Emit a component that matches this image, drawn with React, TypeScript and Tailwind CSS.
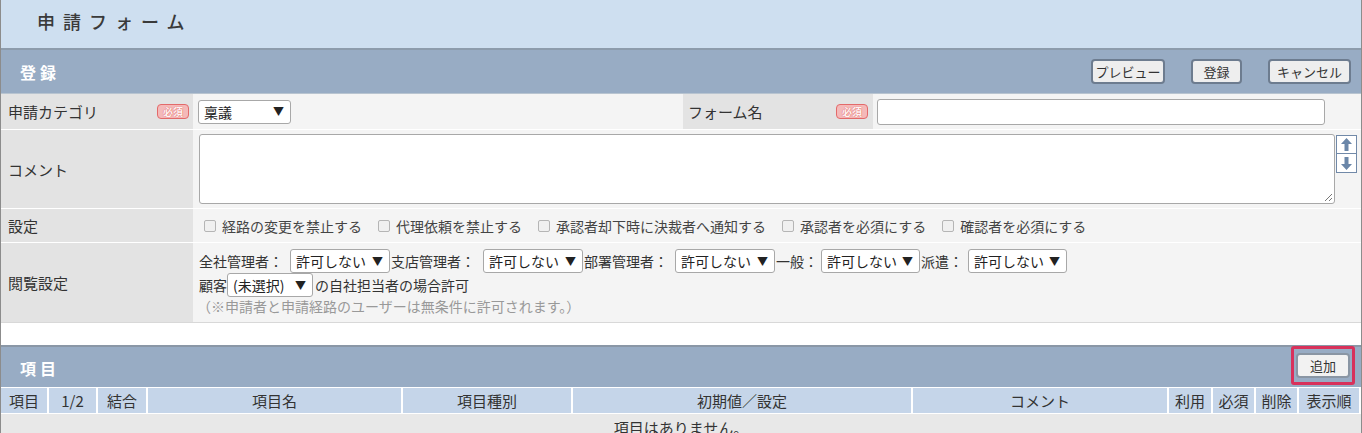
import React from "react";

function Sel({ label, className }: { label: string; className: string }) {
  return (
    <span
      className={`inline-flex items-center justify-between h-[24px] border border-[#a8a8a8] rounded-[3px] bg-white pl-[5px] pr-[6px] text-[14px] text-[#222] ${className}`}
    >
      <span>{label}</span>
      <span className="text-[11px]">▼</span>
    </span>
  );
}

function Badge() {
  return (
    <span className="inline-flex items-center justify-center w-[32px] h-[15px] rounded-[4px] border border-[#e36a6a] bg-[#f4b9b9] text-[10px] leading-none text-[#fff4f4] font-bold [text-shadow:0_0_1px_#d23c3c]">
      必須
    </span>
  );
}

function Btn({ label, className }: { label: string; className: string }) {
  return (
    <span
      className={`inline-flex items-center justify-center h-[25px] rounded-[4px] border-2 border-[#6d7c8f] bg-[#eeeeee] text-[13px] text-[#333] ${className}`}
    >
      {label}
    </span>
  );
}

function Check({ label }: { label: string }) {
  return (
    <span className="inline-flex items-center mr-[16px]">
      <span className="w-[12px] h-[12px] border border-[#b5b5b5] rounded-[2px] bg-[#f0f0f0] mr-[6px]" />
      <span>{label}</span>
    </span>
  );
}

const cols: { label: string; w: string }[] = [
  { label: "項目", w: "w-[48px]" },
  { label: "1/2", w: "w-[49px]" },
  { label: "結合", w: "w-[50px]" },
  { label: "項目名", w: "w-[255px]" },
  { label: "項目種別", w: "w-[170px]" },
  { label: "初期値／設定", w: "w-[340px]" },
  { label: "コメント", w: "w-[256px]" },
  { label: "利用", w: "w-[44px]" },
  { label: "必須", w: "w-[43px]" },
  { label: "削除", w: "w-[43px]" },
  { label: "表示順", w: "w-[60px]" },
];

export default function App() {
  return (
    <div className="w-[1362px] h-[433px] overflow-hidden bg-white border-x border-[#8c8c8c] font-['Noto_Sans_CJK_JP',sans-serif] text-[#333] text-[14px] leading-none">
      {/* top title */}
      <div className="h-[50px] bg-[#cedff0] border-b-2 border-[#8d9cac] flex items-center pl-[36px] pb-[6px]">
        <span className="text-[18px] tracking-[8px] text-[#3a3a3a] font-medium">申請フォーム</span>
      </div>

      {/* section header */}
      <div className="h-[43px] bg-[#98acc4] flex items-center justify-between pl-[19px] pr-[10px]">
        <span className="text-[16px] font-bold text-white tracking-[4px] mt-[1px]">登録</span>
        <div className="flex items-center gap-[26px]">
          <Btn label="プレビュー" className="w-[74px]" />
          <Btn label="登録" className="w-[51px]" />
          <Btn label="キャンセル" className="w-[83px]" />
        </div>
      </div>

      {/* row 1 */}
      <div className="flex h-[37px] border-t border-[#b8c4d0] border-b border-b-white">
        <div className="w-[192px] bg-[#e3e3e3] flex items-center justify-between pl-[7px] pr-[4px]">
          <span className="text-[15px]">申請カテゴリ</span>
          <Badge />
        </div>
        <div className="w-[490px] bg-[#f4f4f4] flex items-center pl-[5px]">
          <Sel label="稟議" className="w-[93px]" />
        </div>
        <div className="w-[190px] bg-[#e3e3e3] flex items-center justify-between pl-[5px] pr-[5px]">
          <span className="text-[15px]">フォーム名</span>
          <Badge />
        </div>
        <div className="flex-1 bg-[#f4f4f4] flex items-center pl-[4px]">
          <span className="w-[448px] h-[26px] border border-[#a8a8a8] rounded-[3px] bg-white" />
        </div>
      </div>

      {/* row 2 */}
      <div className="flex h-[79px] border-b border-white">
        <div className="w-[192px] bg-[#e3e3e3] flex items-center pl-[7px]">
          <span className="text-[15px]">コメント</span>
        </div>
        <div className="flex-1 bg-[#f4f4f4] flex items-start pl-[6px] pt-[4px]">
          <div className="relative w-[1136px] h-[70px] border border-[#a8a8a8] rounded-[3px] bg-white">
            <svg className="absolute right-[1px] bottom-[1px]" width="11" height="11" viewBox="0 0 11 11">
              <path d="M10 3 L3 10 M10 7 L7 10" stroke="#777" strokeWidth="1" />
            </svg>
          </div>
          <div className="flex flex-col ml-[1px] mt-[1px]">
            <span className="w-[21px] h-[19px] border border-[#7189a8] bg-white flex items-center justify-center">
              <svg width="13" height="15" viewBox="0 0 13 15">
                <path d="M6.5 1 L12 7 L8.5 7 L8.5 14 L4.5 14 L4.5 7 L1 7 Z" fill="#6a86a8" />
              </svg>
            </span>
            <span className="w-[21px] h-[19px] border border-t-0 border-[#7189a8] bg-white flex items-center justify-center">
              <svg width="13" height="15" viewBox="0 0 13 15">
                <path d="M6.5 14 L12 8 L8.5 8 L8.5 1 L4.5 1 L4.5 8 L1 8 Z" fill="#6a86a8" />
              </svg>
            </span>
          </div>
        </div>
      </div>

      {/* row 3 */}
      <div className="flex h-[34px] border-b border-white">
        <div className="w-[192px] bg-[#e3e3e3] flex items-center pl-[7px]">
          <span className="text-[15px]">設定</span>
        </div>
        <div className="flex-1 bg-[#f4f4f4] flex items-center pl-[11px] text-[14px] text-[#444]">
          <Check label="経路の変更を禁止する" />
          <Check label="代理依頼を禁止する" />
          <Check label="承認者却下時に決裁者へ通知する" />
          <Check label="承認者を必須にする" />
          <Check label="確認者を必須にする" />
        </div>
      </div>

      {/* row 4 */}
      <div className="flex h-[80px] border-b border-[#d8d8d8]">
        <div className="w-[192px] bg-[#e3e3e3] flex items-center pl-[7px]">
          <span className="text-[15px]">閲覧設定</span>
        </div>
        <div className="flex-1 bg-[#f4f4f4] flex flex-col pl-[6px] pt-[6px] text-[14px]">
          <div className="flex items-center h-[24px]">
            <span className="w-[91px]">全社管理者：</span>
            <Sel label="許可しない" className="w-[100px]" />
            <span className="w-[93px] pl-[1px]">支店管理者：</span>
            <Sel label="許可しない" className="w-[100px]" />
            <span className="w-[92px] pl-[1px]">部署管理者：</span>
            <Sel label="許可しない" className="w-[100px]" />
            <span className="w-[46px] pl-[1px]">一般：</span>
            <Sel label="許可しない" className="w-[99px]" />
            <span className="w-[48px] pl-[1px]">派遣：</span>
            <Sel label="許可しない" className="w-[99px]" />
          </div>
          <div className="flex items-center h-[22px] mt-[1px]">
            <span>顧客</span>
            <Sel label="(未選択)" className="w-[86px] h-[21px]" />
            <span className="ml-[2px]">の自社担当者の場合許可</span>
          </div>
          <div className="h-[20px] flex items-center -ml-[2px] text-[14px] text-[#999]">
            （※申請者と申請経路のユーザーは無条件に許可されます。）
          </div>
        </div>
      </div>

      {/* gap */}
      <div className="h-[22px] bg-white" />

      {/* items header */}
      <div className="h-[42px] bg-[#98acc4] border-t-2 border-[#8a97a6] flex items-center justify-between pl-[19px] pr-[6px]">
        <span className="text-[16px] font-bold text-white tracking-[4px] mt-[2px]">項目</span>
        <div className="relative w-[64px] h-[39px] border-[3px] border-[#d8315b] rounded-[3px] flex items-center justify-center -mt-[3px]">
          <Btn label="追加" className="w-[54px] h-[25px] border border-[#8a96a4] rounded-[2px] bg-[#f2f2f2]" />
        </div>
      </div>

      {/* table header */}
      <div className="flex h-[26px] border-t border-white">
        {cols.map((c, i) => (
          <div
            key={i}
            className={`${c.w} shrink-0 bg-[#c5d5e9] flex items-center justify-center text-[15px] text-[#333] ${i < cols.length - 1 ? "border-r-2 border-white" : ""}`}
          >
            {c.label}
          </div>
        ))}
      </div>

      {/* empty row */}
      <div className="h-[30px] bg-[#e8e8e8] border-t border-white flex justify-center pt-[6px]">
        <span className="text-[15px] text-[#333]">項目はありません。</span>
      </div>
    </div>
  );
}
